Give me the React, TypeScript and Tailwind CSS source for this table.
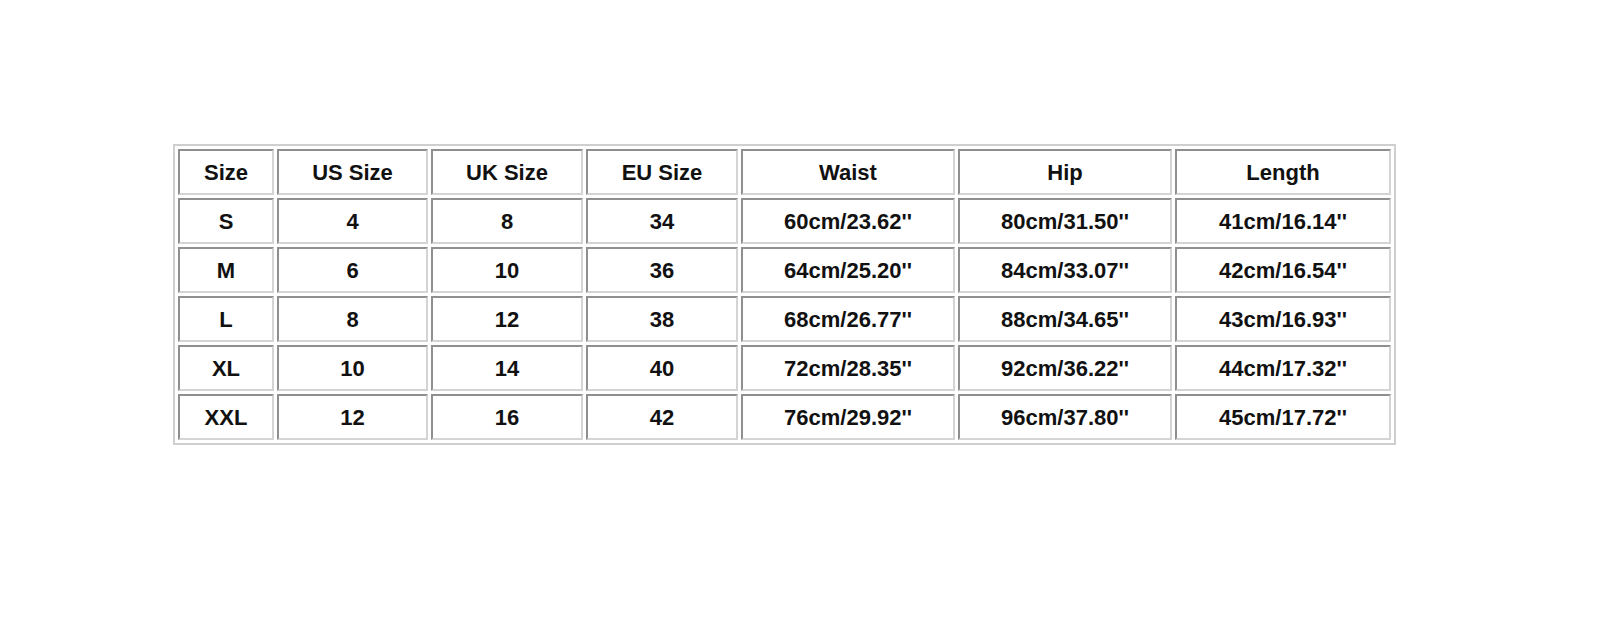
const headers = ["Size", "US Size", "UK Size", "EU Size", "Waist", "Hip", "Length"];

const rows = [
  ["S", "4", "8", "34", "60cm/23.62''", "80cm/31.50''", "41cm/16.14''"],
  ["M", "6", "10", "36", "64cm/25.20''", "84cm/33.07''", "42cm/16.54''"],
  ["L", "8", "12", "38", "68cm/26.77''", "88cm/34.65''", "43cm/16.93''"],
  ["XL", "10", "14", "40", "72cm/28.35''", "92cm/36.22''", "44cm/17.32''"],
  ["XXL", "12", "16", "42", "76cm/29.92''", "96cm/37.80''", "45cm/17.72''"],
];

const widths = ["w-[96px]", "w-[151px]", "w-[152px]", "w-[152px]", "w-[214px]", "w-[214px]", "w-[216px]"];

const cellClass =
  "h-[46px] p-0 text-center align-middle border-2 border-t-[#8f8f8f] border-l-[#8f8f8f] border-r-[#d4d4d4] border-b-[#d4d4d4]";

export default function App() {
  return (
    <div className="w-[1600px] h-[618px] bg-white pt-[144px] pl-[173px] font-['Liberation_Sans',Arial,sans-serif] text-[22px] font-bold text-[#111]">
      <table className="border-separate border-spacing-[3px] border-2 border-[#cfcfcf] w-[1223px] table-fixed">
        <thead>
          <tr>
            {headers.map((h, i) => (
              <th key={h} className={`${cellClass} ${widths[i]} font-bold`}>
                {h}
              </th>
            ))}
          </tr>
        </thead>
        <tbody>
          {rows.map((row) => (
            <tr key={row[0]}>
              {row.map((v, i) => (
                <td key={i} className={cellClass}>
                  {v}
                </td>
              ))}
            </tr>
          ))}
        </tbody>
      </table>
    </div>
  );
}
